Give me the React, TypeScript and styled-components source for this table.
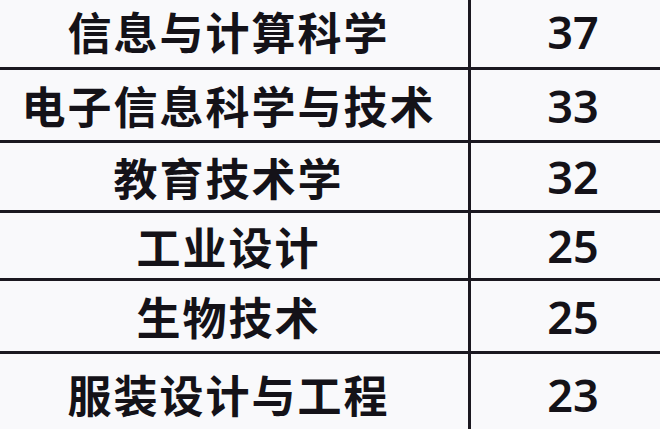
import React from "react";
import styled, { createGlobalStyle } from "styled-components";

const GlobalStyle = createGlobalStyle`
  html, body {
    margin: 0;
    padding: 0;
    background: #f9f9fb;
    overflow: hidden;
  }
  body {
    font-family: "Noto Sans CJK SC", "Noto Sans", sans-serif;
  }
`;

const Table = styled.div`
  width: 685px;
  margin-left: -10px;
  margin-top: -5px;
  display: flex;
  flex-direction: column;
  background: #f9f9fb;
`;

const Row = styled.div<{ $h: number; $last?: boolean }>`
  display: grid;
  grid-template-columns: 481px 1fr;
  height: ${(p) => p.$h}px;
  border-bottom: ${(p) => (p.$last ? "none" : "3px solid #1b1820")};
`;

const NameCell = styled.div`
  display: flex;
  align-items: center;
  justify-content: center;
  border-right: 3px solid #1b1820;
  font-family: "Noto Sans CJK SC", sans-serif;
  font-weight: 700;
  font-size: 44px;
  letter-spacing: 2px;
  color: #141218;
  padding-right: 1px;
`;

const CountCell = styled.div`
  display: flex;
  align-items: center;
  justify-content: center;
  font-family: "Noto Sans", "Noto Sans CJK SC", sans-serif;
  font-weight: 600;
  font-size: 45px;
  color: #141218;
`;

const rows: { name: string; count: number; h: number }[] = [
  { name: "信息与计算科学", count: 37, h: 72 },
  { name: "电子信息科学与技术", count: 33, h: 70 },
  { name: "教育技术学", count: 32, h: 67 },
  { name: "工业设计", count: 25, h: 65 },
  { name: "生物技术", count: 25, h: 70 },
  { name: "服装设计与工程", count: 23, h: 80 },
];

export default function App() {
  return (
    <>
      <GlobalStyle />
      <Table>
        {rows.map((r, i) => (
          <Row key={i} $h={r.h} $last={i === rows.length - 1}>
            <NameCell>{r.name}</NameCell>
            <CountCell>{r.count}</CountCell>
          </Row>
        ))}
      </Table>
    </>
  );
}
